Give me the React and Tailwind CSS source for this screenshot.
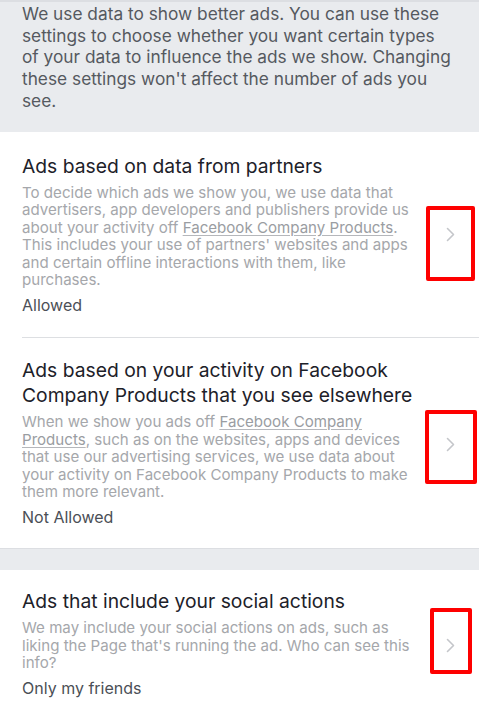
import React from "react";

const FONT = "font-['Inter','Noto_Sans',sans-serif]";

const Chevron = () => (
  <svg width="9" height="15" viewBox="0 0 9 15" fill="none" className="block">
    <path d="M1.5 1.5L7.5 7.5L1.5 13.5" stroke="#c4c6ca" strokeWidth="1.6" strokeLinecap="round" strokeLinejoin="round" />
  </svg>
);

const FbLink = ({ children }) => (
  <span className="text-[#9a9da2] underline decoration-[#b5b7bb] underline-offset-2">{children}</span>
);

const rows = [
  {
    title: "Ads based on data from partners",
    status: "Allowed",
    rowClass: "pt-[22px] pb-[22px]",
    boxClass: "mt-[18px] h-[75px] w-[49px] pt-[17px]",
    desc: (
      <>
        To decide which ads we show you, we use data that advertisers, app developers and publishers
        provide us about your activity off <FbLink>Facebook Company Products</FbLink>. This includes
        your use of partners' websites and apps and certain offline interactions with them, like
        purchases.
      </>
    ),
  },
  {
    title: "Ads based on your activity on Facebook Company Products that you see elsewhere",
    status: "Not Allowed",
    rowClass: "pt-[20px] pb-[21px]",
    boxClass: "mt-[8px] h-[74px] w-[52px] pt-[23px]",
    desc: (
      <>
        When we show you ads off <FbLink>Facebook Company Products</FbLink>, such as on the
        websites, apps and devices that use our advertising services, we use data about your
        activity on Facebook Company Products to make them more relevant.
      </>
    ),
  },
];

const SettingRow = ({ title, desc, status, rowClass, boxClass }) => (
  <div className="flex items-center">
    <div className={`w-[422px] shrink-0 pl-[22px] ${rowClass}`}>
      <h2 className="text-[19.3px] leading-[25px] font-normal text-[#1d2129]">{title}</h2>
      <p className="mt-[5px] text-[15.1px] leading-[17.6px] text-[#a5a7ab]">{desc}</p>
      <p className="mt-[6px] text-[16px] leading-[20px] text-[#4b4f56]">{status}</p>
    </div>
    <div className="flex flex-1 justify-center">
      <div className={`flex flex-col items-center rounded-[2px] border-4 border-[#fe0000] ${boxClass}`}>
        <Chevron />
      </div>
    </div>
  </div>
);

export default function App() {
  return (
    <div className={`h-[703px] w-[479px] overflow-hidden bg-white ${FONT}`}>
      <section className="border-t-2 border-[#dcdee2] bg-[#e9ebee] pt-px pr-[25px] pb-[20px] pl-[22px]">
        <p className="text-[17.3px] leading-[21.7px] text-[#55595f]">
          We use data to show better ads. You can use these settings to choose whether you want
          certain types of your data to influence the ads we show. Changing these settings won't
          affect the number of ads you see.
        </p>
      </section>

      <div className="bg-white">
        <SettingRow {...rows[0]} />
        <div className="ml-[22px] h-px bg-[#dddfe2]" />
        <SettingRow {...rows[1]} />
      </div>

      <div className="h-[22px] border-t border-[#dcdee2] bg-[#e9ebee]" />

      <div className="bg-white">
        <SettingRow
          title="Ads that include your social actions"
          status="Only my friends"
          rowClass="pt-[19px] pb-[22px]"
          boxClass="mb-[8px] h-[66px] w-[42px] pt-[26px]"
          desc="We may include your social actions on ads, such as liking the Page that's running the ad. Who can see this info?"
        />
      </div>
    </div>
  );
}
